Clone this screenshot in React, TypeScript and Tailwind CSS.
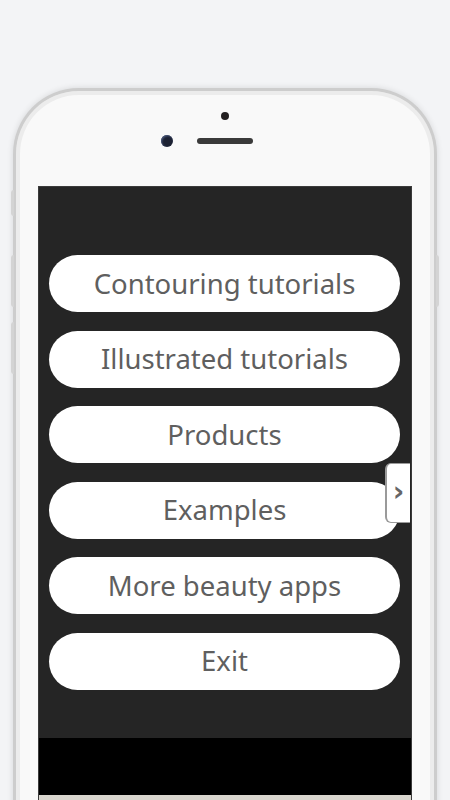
const items = [
  "Contouring tutorials",
  "Illustrated tutorials",
  "Products",
  "Examples",
  "More beauty apps",
  "Exit",
];

export default function App() {
  return (
    <div className="w-[450px] h-[800px] overflow-hidden bg-[#f3f4f6] pt-[88px] px-[13px] relative">
      {/* side buttons */}
      <div className="absolute left-[11px] top-[190px] w-[3px] h-[26px] rounded-l bg-[#d4d4d4]" />
      <div className="absolute left-[11px] top-[255px] w-[3px] h-[52px] rounded-l bg-[#d4d4d4]" />
      <div className="absolute left-[11px] top-[322px] w-[3px] h-[52px] rounded-l bg-[#d4d4d4]" />
      <div className="absolute right-[11px] top-[255px] w-[3px] h-[52px] rounded-r bg-[#d4d4d4]" />

      <div className="h-[740px] rounded-t-[66px] border-[3px] border-b-0 border-[#cdcdcd] bg-[#f9f9f9] shadow-[0_0_6px_rgba(0,0,0,0.12),inset_0_0_0_4px_#ececec] pt-[21px] px-[22px]">
        <div className="flex flex-col items-center gap-[15px] pb-[39px]">
          <div className="w-[8px] h-[8px] rounded-full bg-[#231f20]" />
          <div className="w-full grid grid-cols-[1fr_auto_1fr] items-center">
            <div className="justify-self-end mr-[24px] w-[12px] h-[12px] rounded-full bg-[#1d2233] shadow-[inset_1px_1px_2px_#4a5a80]" />
            <div className="w-[56px] h-[6px] rounded-full bg-[#3a3a3a]" />
            <div />
          </div>
        </div>
        <div className="relative border border-[#3b3b3b] bg-[#252525]">
          <div className="flex flex-col gap-[18.5px] pt-[68px] pb-[48px] pl-[10px] pr-[11px]">
            {items.map((t) => (
              <button
                key={t}
                className="h-[57px] rounded-full bg-white text-[#5f5f5f] text-[27.5px] leading-none flex items-center justify-center"
                style={{ fontFamily: '"Noto Sans", "Open Sans", sans-serif' }}
              >
                {t}
              </button>
            ))}
          </div>
          <div className="h-[57px] bg-black" />
          <div className="h-[12px] bg-[#d9d6cf]" />
          <div
            className="absolute right-[1px] top-[276px] w-[25px] h-[60px] rounded-l-[6px] bg-white border-l-2 border-y border-[#9a9a9a] flex items-center justify-center text-[#666] text-[28px] font-bold leading-none pb-[3px]"
            style={{ fontFamily: '"DejaVu Sans", sans-serif' }}
          >
            ›
          </div>
        </div>
      </div>
    </div>
  );
}
